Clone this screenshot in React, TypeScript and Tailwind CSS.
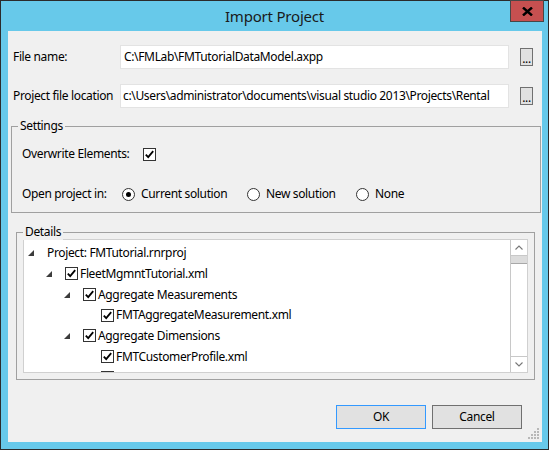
import React from "react";

const font = { fontFamily: '"Noto Sans", "Open Sans", sans-serif' };

function Check() {
  return (
    <span className="inline-flex h-[13px] w-[13px] shrink-0 items-center justify-center border border-[#333333] bg-white">
      <svg width="11" height="11" viewBox="0 0 11 11">
        <path d="M1.8 5.6 L4.2 8.2 L9.2 2.2" fill="none" stroke="#000" strokeWidth="1.8" />
      </svg>
    </span>
  );
}

function Radio({ on }: { on?: boolean }) {
  return (
    <span className="inline-flex h-[13px] w-[13px] shrink-0 items-center justify-center rounded-full border border-[#333333] bg-white">
      {on && <span className="h-[5px] w-[5px] rounded-full bg-black" />}
    </span>
  );
}

function Tri() {
  return (
    <svg width="6" height="6" viewBox="0 0 6 6" className="shrink-0">
      <polygon points="6,0 6,6 0,6" fill="#3c3c3c" />
    </svg>
  );
}

function Row({ level, check, label, tri }: { level: number; check?: boolean; label?: string; tri?: boolean }) {
  return (
    <div className="flex h-[20.67px] items-center" style={{ paddingLeft: 4 + level * 18 }}>
      <span className="flex w-[19px] shrink-0 items-center">{tri ? <Tri /> : null}</span>
      {check && <Check />}
      {label && <span className={check ? "ml-[2px] whitespace-nowrap" : "ml-0 whitespace-nowrap"}>{label}</span>}
    </div>
  );
}

export default function App() {
  return (
    <div className="h-[450px] w-[549px] overflow-hidden text-[12px] tracking-[-0.35px] text-black" style={font}>
      <div className="relative flex h-[450px] w-[549px] flex-col border border-[#2b2b2b] bg-[#67c9ea]">
        {/* title bar */}
        <div className="relative flex h-[30px] items-center justify-center">
          <span className="pt-[1px] text-[15px] tracking-[-0.2px] text-[#1a1a1a]">Import Project</span>
          <div className="absolute right-[4px] top-[-1px] flex h-[22px] w-[34px] items-center justify-center border border-[#474747] bg-[#c75050]">
            <svg width="11" height="9" viewBox="0 0 11 9">
              <path d="M1 0.5 L10 8.5 M10 0.5 L1 8.5" stroke="#000" strokeWidth="2.4" />
            </svg>
          </div>
        </div>
        {/* client */}
        <div className="relative ml-[7px] h-[411px] w-[534px] bg-[#f0f0f0]">
          <div className="flex flex-col">
            {/* file name */}
            <div className="mt-[14px] flex h-[24px] items-center">
              <span className="ml-[5px] w-[107px]">File name:</span>
              <div className="flex h-[24px] w-[389px] items-center border border-[#e3e3e3] bg-white pl-[3px]">
                C:\FMLab\FMTutorialDataModel.axpp
              </div>
              <div className="ml-[11px] flex h-[18px] w-[13px] items-end justify-center border border-[#707070] bg-[#e1e1e1] pb-[1px] leading-[10px]">
                ...
              </div>
            </div>
            <div className="mt-[15px] flex h-[24px] items-center">
              <span className="ml-[5px] w-[107px] whitespace-nowrap">Project file location</span>
              <div className="flex h-[24px] w-[389px] items-center whitespace-nowrap border border-[#e3e3e3] bg-white pl-[2px]">
                c:\Users\administrator\documents\visual studio 2013\Projects\Rental
              </div>
              <div className="ml-[11px] flex h-[18px] w-[13px] items-end justify-center border border-[#707070] bg-[#e1e1e1] pb-[1px] leading-[10px]">
                ...
              </div>
            </div>
            {/* settings */}
            <div className="relative ml-[3px] mt-[18px] h-[87px] w-[530px] border border-[#a0a0a0]">
              <span className="absolute left-[6px] top-[-9px] bg-[#f0f0f0] px-[2px] leading-[16px]">Settings</span>
              <div className="mt-[18px] flex h-[18px] items-center pl-[10px]">
                <span className="w-[121px]">Overwrite Elements:</span>
                <Check />
              </div>
              <div className="mt-[22px] flex h-[18px] items-center pl-[10px]">
                <span className="w-[100px]">Open project in:</span>
                <Radio on />
                <span className="ml-[6px] w-[106px]">Current solution</span>
                <Radio />
                <span className="ml-[6px] w-[90px]">New solution</span>
                <Radio />
                <span className="ml-[6px]">None</span>
              </div>
            </div>
            {/* details */}
            <div className="relative ml-[8px] mt-[19px] h-[148px] w-[519px] border border-[#a0a0a0] pl-[6px] pr-[6px] pt-[6px]">
              <span className="absolute left-[6px] top-[-9px] bg-[#f0f0f0] px-[2px] leading-[16px]">Details</span>
              <div className="flex h-[134px] border border-[#d0d0d0] bg-white">
                <div className="flex-1 overflow-hidden pt-[3px]">
                  <Row level={0} tri label="Project: FMTutorial.rnrproj" />
                  <Row level={1} tri check label="FleetMgmntTutorial.xml" />
                  <Row level={2} tri check label="Aggregate Measurements" />
                  <Row level={3} check label="FMTAggregateMeasurement.xml" />
                  <Row level={2} tri check label="Aggregate Dimensions" />
                  <Row level={3} check label="FMTCustomerProfile.xml" />
                  <Row level={3} check />
                </div>
                <div className="flex w-[17px] flex-col border-l border-[#c8c8c8] bg-white">
                  <div className="flex h-[16px] items-center justify-center border-b border-[#c8c8c8]">
                    <svg width="8" height="5" viewBox="0 0 8 5"><path d="M0.5 4.5 L4 1 L7.5 4.5" fill="none" stroke="#777" strokeWidth="1.1" /></svg>
                  </div>
                  <div className="h-[8px] border-b border-[#a8a8a8] bg-[#dcdcdc]" />
                  <div className="flex-1" />
                  <div className="flex h-[16px] items-center justify-center border-t border-[#c8c8c8]">
                    <svg width="8" height="5" viewBox="0 0 8 5"><path d="M0.5 0.5 L4 4 L7.5 0.5" fill="none" stroke="#777" strokeWidth="1.1" /></svg>
                  </div>
                </div>
              </div>
            </div>
            {/* buttons */}
            <div className="mt-[25px] flex h-[24px] justify-end pr-[20px]">
              <div className="flex h-[24px] w-[90px] items-center justify-center border border-[#3399ff] bg-[#e1e1e1]">OK</div>
              <div className="ml-[6px] flex h-[24px] w-[90px] items-center justify-center border border-[#707070] bg-[#e1e1e1]">Cancel</div>
            </div>
          </div>
          {/* size grip */}
          <svg className="absolute bottom-[2px] right-[2px]" width="12" height="12" viewBox="0 0 12 12">
            {[[9, 0], [6, 3], [9, 3], [3, 6], [6, 6], [9, 6], [0, 9], [3, 9], [6, 9], [9, 9]].map(([x, y], i) => (
              <rect key={i} x={x} y={y} width="2" height="2" fill="#b8b8b8" />
            ))}
          </svg>
        </div>
      </div>
    </div>
  );
}
